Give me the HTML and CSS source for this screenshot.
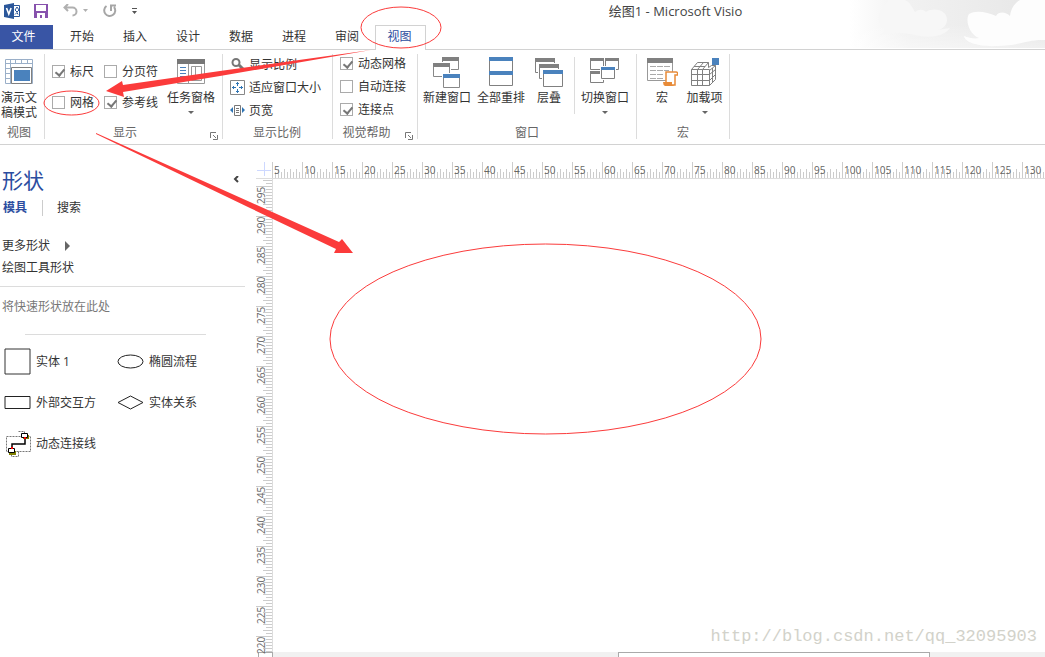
FILE: index.html
```html
<!DOCTYPE html>
<html lang="zh-CN">
<head>
<meta charset="utf-8">
<title>绘图1 - Microsoft Visio</title>
<link rel="stylesheet" href="styles.css">
</head>
<body>
<header class="top">
  <svg class="clouds" width="195" height="49" viewBox="0 0 195 49" aria-hidden="true">
    <defs>
      <linearGradient id="fade"><stop offset="0" stop-color="#ebebeb" stop-opacity="0"/><stop offset=".3" stop-color="#ebebeb" stop-opacity=".7"/><stop offset="1" stop-color="#e6e6e6"/></linearGradient>
      <linearGradient id="low" x1="0" x2="0" y1="0" y2="1"><stop offset=".5" stop-color="#fff" stop-opacity="0"/><stop offset="1" stop-color="#fff" stop-opacity=".4"/></linearGradient>
    </defs>
    <path fill="url(#fade)" d="M0 0h195v48H0z"/>
    <path fill="url(#low)" d="M0 0h195v48H0z"/>
    <path fill="#f7f7f7" d="M34 29C26 24 28 11 34 6C39-5 57-4 62 7C63 9 64 10 65 12C69 9 73 9 76 12C84 7 97 10 97 20C97 25 93 29 88 30L100 28C94 36 82 38 70 36C56 33 44 31 30 35C33 33 34 32 34 29Z"/>
    <path fill="#fdfdfd" d="M129 38C119 34 115 20 119 14C126 10 137 12 146 16C149 11 156 12 160 16C161 7 167 0 173-1H195V40C178 39 169 46 147 46C131 47 115 43 114 36C119 38 125 39 129 38Z"/>
  </svg>
  <div class="titlebar">
    <div class="quick">
      <svg class="logo" width="17" height="16" viewBox="0 0 17 16"><path fill="#2b579a" d="M0 2 10 0v16L0 14z"/><path fill="none" stroke="#fff" stroke-width="1.6" d="m2.500 5 2.300 6 2.300-6"/><path fill="#fff" stroke="#2b579a" d="M10 2.500h5.500v11H10"/><path fill="none" stroke="#2b579a" d="m11 7 2-3 2 3-2 2zM11 11.500l2-2 1 2"/></svg>
      <button class="qbtn" aria-label="保存"><svg width="14" height="14" viewBox="0 0 14 14"><path fill="#8752ad" d="M0 0h14v14H0z"/><path fill="#fff" d="M2 1h10v6H2zM3 9h8v5H8v-3H6v3H3z"/></svg></button>
      <button class="qbtn undo" aria-label="撤消"><svg width="26" height="14" viewBox="0 0 26 14"><path fill="none" stroke="#b0b0b0" stroke-width="2" d="M5 0 1.500 3.500 5 7M2 3.500h7.500a4 4 0 0 1 0 8"/><path fill="#b0b0b0" d="M20 5h5l-2.500 3z"/></svg></button>
      <button class="qbtn redo" aria-label="重复"><svg width="14" height="14" viewBox="0 0 14 14"><path fill="none" stroke="#a6a6a6" stroke-width="2" d="M3.500 2A5.500 5.500 0 1 0 11 3M8 7V1.500h5"/></svg></button>
      <button class="qbtn more" aria-label="自定义"><svg width="7" height="7" viewBox="0 0 7 7"><path fill="#555" d="M1 0h5v1H1zM1 3h5L3.500 6z"/></svg></button>
    </div>
    <h1 class="title">绘图1 - Microsoft Visio</h1>
  </div>
  <nav class="tabs">
    <button class="tab file">文件</button>
    <button class="tab">开始</button>
    <button class="tab">插入</button>
    <button class="tab">设计</button>
    <button class="tab">数据</button>
    <button class="tab">进程</button>
    <button class="tab">审阅</button>
    <button class="tab active"><span>视图</span></button>
  </nav>
</header>

<section class="ribbon">
  <div class="group g-view">
    <div class="body">
      <button class="big narrow"><svg width="28" height="26" viewBox="0 0 28 26"><path fill="#fff" stroke="#9aafc8" d="M.5.500h27v24H.5zM0 4.500h28M5.500 0v25M10.500 0v5M16.500 0v5M22.500 0v5M0 9.500h6M0 14.500h6M0 19.500h6"/><path fill="#fff" stroke="#808080" d="M6.500 8.500h20v16h-20z"/><path fill="#4a82bd" d="M9 11h16v11H9z"/></svg><span>演示文<br>稿模式</span></button>
    </div>
    <div class="caption">视图</div>
  </div>
  <div class="group g-show">
    <div class="body">
      <div class="checks">
        <label class="check"><input type="checkbox" checked>标尺</label>
        <label class="check"><input type="checkbox">分页符</label>
        <label class="check"><input type="checkbox">网格</label>
        <label class="check"><input type="checkbox" checked>参考线</label>
      </div>
      <button class="big"><svg width="28" height="26" viewBox="0 0 28 26"><path fill="#fff" stroke="#999" d="M.5.500h27v24H.5z"/><path fill="#777" d="M0 0h28v5H0z"/><path fill="none" stroke="#4a82bd" d="M3 8.500h6M3 11.500h6M3 14.500h6M3 17.500h6"/><path fill="none" stroke="#999" d="M11.500 5v20M14.500 7.500h10v14h-10zM18.500 7v14"/></svg><span>任务窗格</span><i class="arrow"></i></button>
    </div>
    <div class="caption">显示</div>
    <button class="launcher" aria-label="显示选项"><svg width="8" height="8" viewBox="0 0 8 8"><path fill="none" stroke="#777" d="M.5 6V.500H6M3 3l3 3M7.500 3v4.500H3"/></svg></button>
  </div>
  <div class="group g-zoom">
    <div class="body rows">
      <button class="small"><svg width="15" height="15" viewBox="0 0 15 15"><circle cx="6" cy="5.500" r="3.500" fill="none" stroke="#777" stroke-width="2"/><path stroke="#777" stroke-width="3" d="m9 8 4 4"/></svg>显示比例</button>
      <button class="small"><svg width="15" height="15" viewBox="0 0 15 15"><path fill="none" stroke="#888" d="M.5.500h14v14H.5z"/><path fill="none" stroke="#2f75b5" d="M7.500 2v4M6 3.500h3M7.500 9v4M6 11.500h3M2 7.500h4M3.500 6v3M9 7.500h4M11.500 6v3"/></svg>适应窗口大小</button>
      <button class="small"><svg width="15" height="15" viewBox="0 0 15 15"><path fill="#2f75b5" d="m0 7 3-3v6zM15 7l-3-3v6z"/><path fill="#fff" stroke="#777" d="M4.500 2.500h6v10h-6zM6 5.500h3M6 7.500h3M6 9.500h3"/></svg>页宽</button>
    </div>
    <div class="caption">显示比例</div>
  </div>
  <div class="group g-aids">
    <div class="body rows">
      <label class="check"><input type="checkbox" checked>动态网格</label>
      <label class="check"><input type="checkbox">自动连接</label>
      <label class="check"><input type="checkbox" checked>连接点</label>
    </div>
    <div class="caption">视觉帮助</div>
    <button class="launcher" aria-label="视觉帮助选项"><svg width="8" height="8" viewBox="0 0 8 8"><path fill="none" stroke="#777" d="M.5 6V.500H6M3 3l3 3M7.500 3v4.500H3"/></svg></button>
  </div>
  <div class="group g-window">
    <div class="body">
      <button class="big"><svg width="28" height="32" viewBox="0 0 28 32"><g fill="#fff" stroke="#888"><path d="M9.500.500h16v12h-16z"/><path stroke="#fff" stroke-width="3" d="M.5 6.500h16v13H.5z"/><path d="M.5 6.500h16v13H.5z"/><path stroke="#fff" stroke-width="3" d="M10.500 17.500h16v13h-16z"/><path d="M10.500 17.500h16v13h-16z"/></g><path fill="#808080" d="M9 0h17v4H9zM0 6h17v4H0z"/><path fill="#4a82bd" d="M10 17h17v4H10z"/></svg><span>新建窗口</span></button>
      <button class="big"><svg width="24" height="32" viewBox="0 0 24 32"><path fill="#fff" stroke="#808080" d="M.5.500h23v28H.5z"/><path fill="#4a82bd" d="M0 0h24v4H0zM0 14h24v4H0z"/></svg><span>全部重排</span></button>
      <button class="big slim"><svg width="28" height="32" viewBox="0 0 28 32"><g fill="#fff" stroke="#808080"><path d="M.5 1.500h19v14H.5z"/><path stroke="#fff" stroke-width="3" d="M4.500 7.500h19v14h-19z"/><path d="M4.500 7.500h19v14h-19z"/><path stroke="#fff" stroke-width="3" d="M8.500 13.500h19v16h-19z"/><path d="M8.500 13.500h19v16h-19z"/></g><path fill="#808080" d="M0 1h20v4H0zM4 7h20v4H4z"/><path fill="#4a82bd" d="M8 13h20v4H8z"/></svg><span>层叠</span></button>
      <i class="divider"></i>
      <button class="big"><svg width="30" height="32" viewBox="0 0 30 32"><g fill="#fff" stroke="#808080"><path d="M.5 1.500h13v11H.5zM15.500 1.500h13v11h-13zM.5 14.500h13v11H.5z"/><path stroke="#fff" stroke-width="3" d="M11.500 10.500h13v11h-13z"/><path d="M11.500 10.500h13v11h-13z"/></g><path fill="#808080" d="M0 1h14v3H0zM15 1h14v3H15zM0 14h10v3H0z"/><path fill="#4a82bd" d="M11 10h14v3H11z"/></svg><span>切换窗口</span><i class="arrow"></i></button>
    </div>
    <div class="caption">窗口</div>
  </div>
  <div class="group g-macro">
    <div class="body">
      <button class="big slim"><svg width="31" height="32" viewBox="0 0 31 32"><path fill="#fff" stroke="#999" d="M.5 1.500h25v22H.5z"/><path fill="#808080" d="M0 1h26v5H0z"/><path stroke="#aaa" d="M3 9.500h6M10 9.500h6M17 9.500h6M3 13.500h6M10 13.500h6M17 13.500h5M3 17.500h6M10 17.500h6M3 21.500h6M10 21.500h6"/><path fill="#fff" stroke="#e88b38" stroke-width="1.500" d="M19 26V15h10q2 0 1.500 3H28v10h-8"/><path fill="#e88b38" d="M16 25h9v3q2 0 2 1H18q-2-1-2-4z"/></svg><span>宏</span></button>
      <button class="big"><svg width="28" height="32" viewBox="0 0 28 32"><path fill="#fff" stroke="#808080" d="M.5 12.500 6.500 5.500h11v5l3-2h4v14l-6 6H.5zM.5 12.500h11l6-7M.5 17.500h18l6-5M.5 23.500h18l6-6M6.500 28.500v-16l6-7M11.500 28.500v-16M11.500 12.500h7v16M18.500 13.500l6-5M3 9.500h11M21.500 11v14"/><path fill="#4a82bd" d="M21 1h7v7h-7z"/></svg><span>加载项</span><i class="arrow"></i></button>
    </div>
    <div class="caption">宏</div>
  </div>
</section>

<main class="work">
  <aside class="shapes">
    <div class="shapes-head"><h2>形状</h2><button class="fold" aria-label="折叠"><svg width="6" height="8" viewBox="0 0 6 8"><path fill="none" stroke="#444" stroke-width="2" d="M5 0 2 3l3 3"/></svg></button></div>
    <div class="modes"><button class="mode on">模具</button><button class="mode">搜索</button></div>
    <button class="line-item">更多形状 <i class="right"></i></button>
    <button class="line-item">绘图工具形状</button>
    <div class="drop">将快速形状放在此处</div>
    <ul class="stencils">
      <li><svg width="27" height="27" viewBox="0 0 27 27"><path fill="#fff" stroke="#333" d="M1 1h25v25H1z"/></svg>实体 1</li>
      <li><svg width="27" height="27" viewBox="0 0 27 27"><ellipse cx="13.500" cy="13.500" rx="12.500" ry="6.500" fill="#fff" stroke="#222"/></svg>椭圆流程</li>
      <li><svg width="27" height="27" viewBox="0 0 27 27"><path fill="#fff" stroke="#222" d="M1 7.500h25v12H1z"/></svg>外部交互方</li>
      <li><svg width="27" height="27" viewBox="0 0 27 27"><path fill="#fff" stroke="#222" d="m1 13.500 12.500-6.500L26 13.500 13.500 20z"/></svg>实体关系</li>
      <li><svg width="27" height="27" viewBox="0 0 27 27"><path fill="none" stroke="#777" stroke-dasharray="2 1" d="M2.500 6.500h24v15h-24zM14.500 1.500h6v5M7.500 21.500v5h7v-5"/><path fill="none" stroke="#000" stroke-width="1.500" d="M8 18v-4h13V8"/><path fill="#808000" d="M19 5h6v4h-6zM5 21h7v4H5z"/><path fill="#fff" stroke="#000" d="M17.500 3.500h6v4h-6zM4.500 18.500h6v4h-6z"/><path fill="red" d="M20 7h2v2h-2zM7 17h2v2H7z"/></svg>动态连接线</li>
    </ul>
  </aside>
  <section class="canvas">
    <div class="corner"></div>
    <div class="ruler-x"><span>5</span><span>10</span><span>15</span><span>20</span><span>25</span><span>30</span><span>35</span><span>40</span><span>45</span><span>50</span><span>55</span><span>60</span><span>65</span><span>70</span><span>75</span><span>80</span><span>85</span><span>90</span><span>95</span><span>100</span><span>105</span><span>110</span><span>115</span><span>120</span><span>125</span><span>130</span></div>
    <div class="ruler-y"><span>295</span><span>290</span><span>285</span><span>280</span><span>275</span><span>270</span><span>265</span><span>260</span><span>255</span><span>250</span><span>245</span><span>240</span><span>235</span><span>230</span><span>225</span><span>220</span></div>
    <div class="page"><p class="mark">http://blog.csdn.net/qq_32095903</p></div>
    <div class="pager"></div>
    <div class="scroll"><div class="thumb"></div></div>
  </section>
</main>

<svg class="notes" width="1045" height="657" viewBox="0 0 1045 657" aria-hidden="true">
  <g fill="none" stroke="#fb3b3b">
    <ellipse cx="401" cy="27.500" rx="40" ry="20.500"/>
    <ellipse cx="71.500" cy="103" rx="27.500" ry="12"/>
    <ellipse cx="545.500" cy="339" rx="215.500" ry="95"/>
  </g>
  <path fill="#fb3b3b" d="M106 91 122 81 123 85 220 71 371 50 220 76 123 92 124 97ZM96 133 250 202 339 242 342 239 353 253H334L336 249 250 208 96 134Z"/>
</svg>
</body>
</html>
```
FILE: styles.css
```css
* { box-sizing: border-box; }
body {
  margin: 0;
  height: 100vh;
  overflow: hidden;
  position: relative;
  display: flex;
  flex-direction: column;
  background: #fff;
  color: #333;
  font: 12px/16px "Open Sans", "Noto Sans CJK SC", sans-serif;
}
button {
  border: 0;
  padding: 0;
  background: none;
  color: inherit;
  font: inherit;
}
svg { display: block; flex: none; }
h1, h2, p, ul { margin: 0; padding: 0; font-weight: normal; }

/* title and tabs */
.top { position: relative; border-bottom: 1px solid #d2d2d2; }
.clouds { position: absolute; right: 0; top: 0; }
.titlebar { position: relative; display: flex; align-items: center; height: 24px; padding-bottom: 2px; }
.quick { display: flex; align-items: center; width: 306px; padding-left: 4px; }
.logo { margin-right: 13px; }
.undo { margin-left: 15px; }
.redo { margin-left: 14px; }
.more { margin-left: 14px; }
.title { flex: 1; text-align: center; font-size: 13px; color: #444; white-space: nowrap; }
.tabs { position: relative; display: flex; height: 25px; }
.tab { width: 53px; padding-left: 5px; }
.file { padding: 0 6px 0 0; margin-top: 1px; background: #3955a5; color: #fff; }
.active { color: #2b4da0; padding: 0; }
.active span {
  display: block;
  width: 51px;
  height: 25px;
  margin: 1px 0 -1px 4px;
  padding: 3px 2px 0 0;
  border: 1px solid #d2d2d2;
  border-bottom: 0;
  background: #fff;
}

/* ribbon */
.ribbon { display: flex; height: 95px; padding: 4px 0 5px; border-bottom: 1px solid #d2d2d2; }
.group { position: relative; display: flex; flex-direction: column; border-right: 1px solid #dcdcdc; }
.body { display: flex; flex: none; height: 71px; }
.caption { text-align: center; color: #666; }
.g-view { width: 45px; padding-right: 6px; }
.g-show { width: 178px; }
.g-show .caption { padding-right: 17px; }
.g-zoom { width: 110px; padding-left: 7px; }
.g-zoom .caption { padding-right: 8px; }
.g-aids { width: 85px; padding-left: 7px; }
.g-aids .caption { padding-right: 24px; }
.g-window { width: 219px; }
.g-macro { width: 93px; }
.big { display: flex; flex-direction: column; align-items: center; width: 54px; padding-top: 3px; line-height: 15px; white-space: nowrap; }
.big svg { height: 32px; margin-bottom: 1px; }
.narrow { width: 38px; }
.g-view .big, .g-show .big { padding-top: 5px; }
.g-view .big svg, .g-show .big svg { height: 26px; margin-bottom: 5px; }
.slim { width: 42px; }
.g-window .body { padding-left: 2px; }
.g-macro .body { padding-left: 4px; }
.g-macro .big:last-child { width: 43px; }
.arrow { margin-top: 6px; border: 3px solid transparent; border-top-color: #666; border-bottom: 0; }
.divider { width: 1px; height: 57px; margin: 3px 3px 0 4px; background: #dcdcdc; }
.checks { display: grid; grid-template-columns: 52px 66px; grid-template-rows: 31px 31px; padding: 2px 0 0 7px; width: 119px; }
.check { display: flex; align-items: center; gap: 5px; white-space: nowrap; }
.check input {
  appearance: none;
  position: relative;
  flex: none;
  width: 13px;
  height: 13px;
  margin: 0;
  border: 1px solid #ababab;
  background: #fff;
}
.check input:checked::after {
  content: "";
  position: absolute;
  left: 4px;
  top: 1px;
  width: 4px;
  height: 7px;
  border: solid #777;
  border-width: 0 2px 2px 0;
  transform: rotate(40deg);
}
.rows { flex-direction: column; }
.rows > * { height: 23px; }
.g-zoom .rows { margin-top: -1px; height: 72px; }
.g-aids .rows { margin-top: -2px; height: 73px; }
.small { display: flex; align-items: center; gap: 4px; white-space: nowrap; }
.launcher { position: absolute; right: 4px; bottom: -1px; }

/* shapes pane */
.work { flex: 1; min-height: 0; display: flex; }
.shapes { width: 256px; padding: 20px 11px 0 0; }
.shapes-head { display: flex; align-items: center; justify-content: space-between; height: 30px; padding: 0 6px 0 2px; }
.shapes h2 { font-size: 21px; line-height: 30px; color: #2b4da0; }
.modes { display: flex; margin: 5px 0 19px; padding-left: 3px; }
.mode + .mode { margin-left: 15px; padding-left: 14px; border-left: 1px solid #ccc; }
.mode.on { font-weight: bold; color: #2b4da0; }
.line-item { display: flex; align-items: center; height: 22px; margin-left: 2px; }
.right { margin-left: 15px; border: 5px solid transparent; border-left-color: #666; border-right: 0; }
.drop { margin-top: 7px; padding: 12px 2px 19px; border-top: 1px solid #dcdcdc; color: #777; }
.stencils {
  display: grid;
  grid-template-columns: 113px 113px;
  grid-auto-rows: 41px;
  padding: 7px 0 0 4px;
  list-style: none;
  background: linear-gradient(#dcdcdc, #dcdcdc) 25px 0 / 181px 1px no-repeat;
}
.stencils li { display: flex; align-items: center; gap: 5px; white-space: nowrap; }

/* drawing area */
.canvas { flex: 1; min-width: 0; display: grid; grid-template-columns: 17px 1fr; grid-template-rows: 17px 1fr 5px; padding-top: 17px; }
.corner {
  border-bottom: 1px solid #ddd;
  background:
    linear-gradient(#cdd8ff, #cdd8ff) 8px 0 / 1px 14px no-repeat,
    linear-gradient(#cdd8ff, #cdd8ff) 1px 8px / 14px 1px no-repeat;
}
.ruler-x, .ruler-y { display: flex; min-width: 0; min-height: 0; color: #666; font-size: 10px; line-height: 10px; }
.ruler-x {
  overflow: hidden;
  margin-left: -1px;
  border-bottom: 1px solid #ddd;
  background:
    linear-gradient(90deg, #ccc 1px, transparent 1px) 0 0 / 30px 16px repeat-x,
    linear-gradient(90deg, #ccc 1px, transparent 1px) 0 100% / 6px 9px repeat-x,
    linear-gradient(90deg, #ccc 1px, transparent 1px) 0 100% / 3px 6px repeat-x;
}
.ruler-x span { flex: 0 0 30px; padding: 3px 0 0 2px; }
.ruler-y {
  flex-direction: column;
  padding-top: 7px;
  border-right: 1px solid #ddd;
  background:
    linear-gradient(#ccc 1px, transparent 1px) 0 7px / 16px 30px repeat-y,
    linear-gradient(#ccc 1px, transparent 1px) 100% 1px / 9px 6px repeat-y,
    linear-gradient(#ccc 1px, transparent 1px) 100% 1px / 6px 3px repeat-y;
}
.ruler-y span { flex: 0 0 30px; width: 10px; padding-bottom: 1px; writing-mode: vertical-rl; transform: rotate(180deg); text-align: right; }
.page { display: flex; align-items: flex-end; justify-content: flex-end; padding: 0 8px 5px 0; }
.mark { font: 17px/20px "Liberation Mono", monospace; color: #d2d2ca; }
.pager { margin-left: 2px; border: 1px solid #aaa; border-bottom: 0; background: #fff; }
.scroll { padding: 0 115px 0 345px; background: #f1f1f1; }
.thumb { height: 5px; border: 1px solid #aaa; border-bottom: 0; background: #fff; }

.notes { position: absolute; left: 0; top: 0; pointer-events: none; }
```
